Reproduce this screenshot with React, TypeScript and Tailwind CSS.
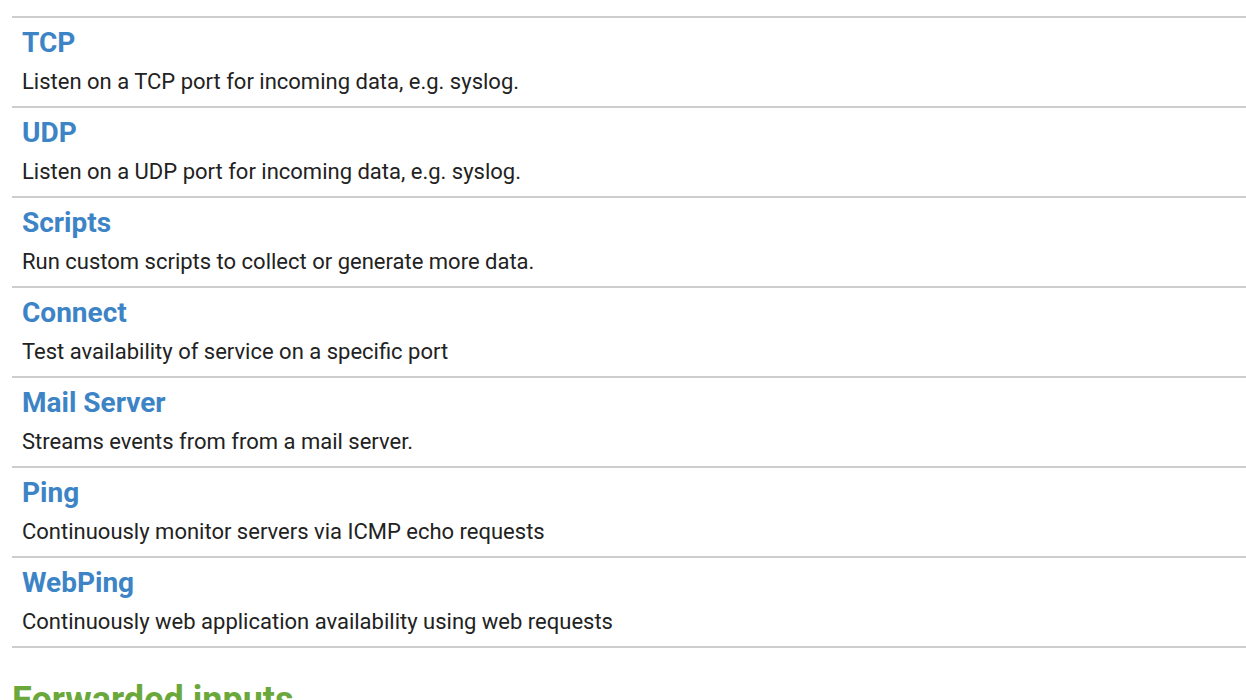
const inputs = [
  { name: 'TCP', desc: 'Listen on a TCP port for incoming data, e.g. syslog.' },
  { name: 'UDP', desc: 'Listen on a UDP port for incoming data, e.g. syslog.' },
  { name: 'Scripts', desc: 'Run custom scripts to collect or generate more data.' },
  { name: 'Connect', desc: 'Test availability of service on a specific port' },
  { name: 'Mail Server', desc: 'Streams events from from a mail server.' },
  { name: 'Ping', desc: 'Continuously monitor servers via ICMP echo requests' },
  { name: 'WebPing', desc: 'Continuously web application availability using web requests' },
]

export default function App() {
  return (
    <div className="h-[700px] overflow-hidden bg-white pt-4 pl-3 font-['Roboto',sans-serif]">
      <ul className="border-t-2 border-[#cdcdcd]">
        {inputs.map((item) => (
          <li key={item.name} className="border-b-2 border-[#cdcdcd] px-[10px] pt-[9px] pb-[11px]">
            <a href="#" className="block text-[28px] font-bold leading-[32px] text-[#3d84c6]">
              {item.name}
            </a>
            <p className="mt-[10px] text-[22px] leading-[26px] text-[#222]">{item.desc}</p>
          </li>
        ))}
      </ul>
      <h2 className="mt-[32px] text-[36px] font-bold leading-[40px] text-[#6aa83c]">Forwarded inputs</h2>
    </div>
  )
}
